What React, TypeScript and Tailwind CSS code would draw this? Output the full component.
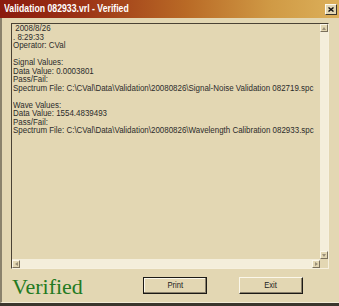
import React from "react";

const Arrow = ({ dir }: { dir: "up" | "down" | "left" | "right" }) => {
  const pts =
    dir === "up"
      ? "0,3 2,0 4,3"
      : dir === "down"
      ? "0,0 4,0 2,3"
      : dir === "left"
      ? "3,0 3,4 0,2"
      : "0,0 0,4 3,2";
  const w = dir === "up" || dir === "down" ? 4 : 3;
  const h = dir === "up" || dir === "down" ? 3 : 4;
  return (
    <svg width={w} height={h} viewBox={`0 0 ${w} ${h}`}>
      <polygon points={pts} fill="#9a8f78" />
    </svg>
  );
};

const ScrollBtn = ({ dir }: { dir: "up" | "down" | "left" | "right" }) => (
  <div className="w-[8px] h-[8px] shrink-0 bg-[#e3d7b3] border-t border-l border-t-[#fbf7ea] border-l-[#fbf7ea] border-r border-b border-r-[#7a705c] border-b-[#7a705c] flex items-center justify-center">
    <Arrow dir={dir} />
  </div>
);

const lines = [
  " 2008/8/26",
  ". 8:29:33",
  "Operator: CVal",
  "",
  "Signal Values:",
  "Data Value: 0.0003801",
  "Pass/Fail:",
  "Spectrum File: C:\\CVal\\Data\\Validation\\20080826\\Signal-Noise Validation 082719.spc",
  "",
  "Wave Values:",
  "Data Value: 1554.4839493",
  "Pass/Fail:",
  "Spectrum File: C:\\CVal\\Data\\Validation\\20080826\\Wavelength Calibration 082933.spc",
];

export default function App() {
  return (
    <div className="w-[339px] h-[306px] overflow-hidden flex flex-col bg-[#e3d7b3] border-b-[3px] border-b-[#3b362d] font-['Liberation_Sans',Arial,sans-serif]">
      {/* Title bar */}
      <div className="h-[18px] shrink-0 flex items-center justify-between pl-[4px] pr-[2px] bg-[linear-gradient(to_right,#8a1a0e,#9c3416_25%,#b96a26_55%,#d09a45_80%,#dcb05a)]">
        <span className="text-white font-bold text-[10px] leading-none whitespace-nowrap origin-left scale-x-[0.87] inline-block">
          Validation 082933.vrl - Verified
        </span>
        <div className="w-[12px] h-[11px] bg-[#e3d7b3] border-t border-l border-t-[#fffbee] border-l-[#fffbee] border-r border-b border-r-[#3a352c] border-b-[#3a352c] flex items-center justify-center">
          <svg width="6" height="5" viewBox="0 0 6 5">
            <path d="M0.5 0.5 L5.5 4.5 M5.5 0.5 L0.5 4.5" stroke="#111" strokeWidth="1.4" />
          </svg>
        </div>
      </div>

      {/* Body */}
      <div className="flex-1 flex flex-col border-l-2 border-l-[#8a826c] border-b border-b-[#f3ecd8] pl-[9px] pr-[10px]">
        {/* Text box */}
        <div className="mt-[5px] h-[246px] flex flex-col border-t border-l border-t-[#4a4235] border-l-[#4a4235] border-r border-b border-r-[#f6f0de] border-b-[#f6f0de]">
          <div className="flex-1 flex min-h-0">
            <div className="flex-1 overflow-hidden pl-[1px] pt-[0px]">
              <div className="origin-top-left scale-x-[0.935] w-[400px] text-[8.5px] leading-[8.5px] text-[#2b2b2b] whitespace-pre">
                {lines.map((l, i) => (
                  <div key={i} className="h-[8.5px]">
                    {l}
                  </div>
                ))}
              </div>
            </div>
            <div className="w-[8px] flex flex-col bg-[#f4eedb]">
              <ScrollBtn dir="up" />
              <div className="flex-1" />
              <ScrollBtn dir="down" />
            </div>
          </div>
          <div className="h-[9px] flex">
            <div className="flex-1 flex bg-[#f4eedb] items-start pt-[1px]">
              <ScrollBtn dir="left" />
              <div className="flex-1" />
              <ScrollBtn dir="right" />
            </div>
            <div className="w-[8px] bg-[#e3d7b3]" />
          </div>
        </div>

        {/* Bottom row */}
        <div className="flex-1 flex items-end pb-[4px]">
          <span className="font-['Liberation_Serif','Times_New_Roman',serif] text-[22px] leading-[22px] text-[#237a22] ml-[1px] w-[131px]">
            Verified
          </span>
          <button className="mb-[4px] w-[64px] h-[17px] bg-[#e3d7b3] border border-[#1c1a16] shadow-[inset_-1px_-1px_0_#8a816c,inset_1px_1px_0_#fbf7ea] flex items-center justify-center text-[9px] text-[#222]">
            <span className="inline-block scale-x-[0.85]">Print</span>
          </button>
          <button className="mb-[4px] ml-[32px] w-[64px] h-[17px] bg-[#e3d7b3] border-t border-l border-t-[#fbf7ea] border-l-[#fbf7ea] border-r border-b border-r-[#1c1a16] border-b-[#1c1a16] shadow-[inset_-1px_-1px_0_#8a816c] flex items-center justify-center text-[9px] text-[#222]">
            <span className="inline-block scale-x-[0.85]">Exit</span>
          </button>
        </div>
      </div>
    </div>
  );
}
